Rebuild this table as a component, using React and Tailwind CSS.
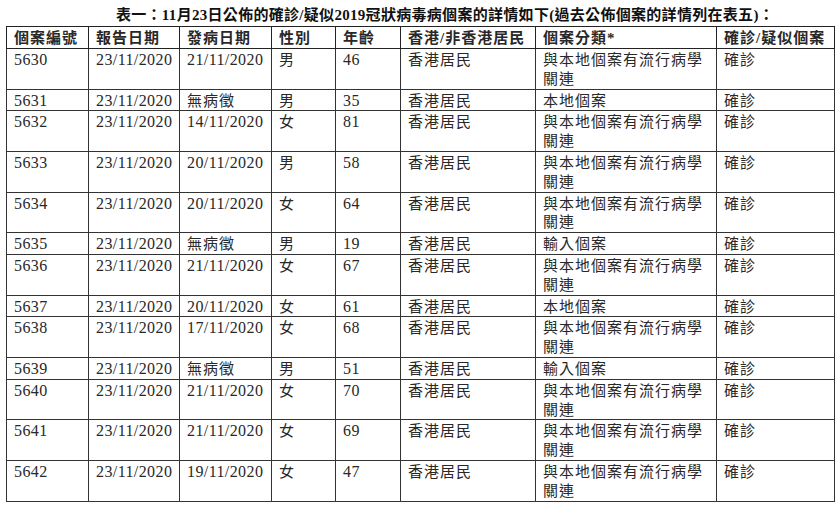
const rows = [
  ['5630', '23/11/2020', '21/11/2020', '男', '46', '香港居民', ['與本地個案有流行病學', '關連'], '確診'],
  ['5631', '23/11/2020', '無病徵', '男', '35', '香港居民', ['本地個案'], '確診'],
  ['5632', '23/11/2020', '14/11/2020', '女', '81', '香港居民', ['與本地個案有流行病學', '關連'], '確診'],
  ['5633', '23/11/2020', '20/11/2020', '男', '58', '香港居民', ['與本地個案有流行病學', '關連'], '確診'],
  ['5634', '23/11/2020', '20/11/2020', '女', '64', '香港居民', ['與本地個案有流行病學', '關連'], '確診'],
  ['5635', '23/11/2020', '無病徵', '男', '19', '香港居民', ['輸入個案'], '確診'],
  ['5636', '23/11/2020', '21/11/2020', '女', '67', '香港居民', ['與本地個案有流行病學', '關連'], '確診'],
  ['5637', '23/11/2020', '20/11/2020', '女', '61', '香港居民', ['本地個案'], '確診'],
  ['5638', '23/11/2020', '17/11/2020', '女', '68', '香港居民', ['與本地個案有流行病學', '關連'], '確診'],
  ['5639', '23/11/2020', '無病徵', '男', '51', '香港居民', ['輸入個案'], '確診'],
  ['5640', '23/11/2020', '21/11/2020', '女', '70', '香港居民', ['與本地個案有流行病學', '關連'], '確診'],
  ['5641', '23/11/2020', '21/11/2020', '女', '69', '香港居民', ['與本地個案有流行病學', '關連'], '確診'],
  ['5642', '23/11/2020', '19/11/2020', '女', '47', '香港居民', ['與本地個案有流行病學', '關連'], '確診'],
]

const headers = ['個案編號', '報告日期', '發病日期', '性別', '年齡', '香港/非香港居民', '個案分類*', '確診/疑似個案']
const widths = [82, 91, 92, 64, 65, 135, 181, 118]

export default function App() {
  return (
    <div
      className="w-[840px] h-[507px] bg-white px-[6px] pt-[5px] text-[#282828] overflow-hidden"
      style={{ fontFamily: '"Liberation Serif", "Noto Sans CJK TC", serif' }}
    >
      {/* title sits a little right of centre in the scan */}
      <h1 className="text-center font-bold text-[15px] leading-[20px] h-[21px] pl-[50px] tracking-[0.3px] text-[#111]">
        表一：11月23日公佈的確診/疑似2019冠狀病毒病個案的詳情如下(過去公佈個案的詳情列在表五)：
      </h1>
      <table className="table-fixed border-collapse w-[828px] text-[16px]">
        <colgroup>
          {widths.map((w, i) => (
            <col key={i} style={{ width: w }} />
          ))}
        </colgroup>
        <thead>
          <tr>
            {headers.map((h) => (
              <th
                key={h}
                className="border border-[#222] text-left font-bold align-top pl-[7px] pt-[1px] leading-[20px] tracking-[1px] text-[15px] whitespace-nowrap"
              >
                {h}
              </th>
            ))}
          </tr>
        </thead>
        <tbody>
          {rows.map((r) => (
            <tr key={r[0]}>
              {r.map((c, i) => (
                <td
                  key={i}
                  className="border border-[#333] align-top pl-[7px] pt-[2px] leading-[18.8px] whitespace-nowrap"
                >
                  {Array.isArray(c) ? (
                    c.map((line, j) => (
                      <div key={j} className="tracking-[1px] text-[15px]">
                        {line}
                      </div>
                    ))
                  ) : (
                    <span className={/[0-9]/.test(c) ? 'tracking-[0.4px]' : 'tracking-[1px] text-[15px]'}>{c}</span>
                  )}
                </td>
              ))}
            </tr>
          ))}
        </tbody>
      </table>
    </div>
  )
}
